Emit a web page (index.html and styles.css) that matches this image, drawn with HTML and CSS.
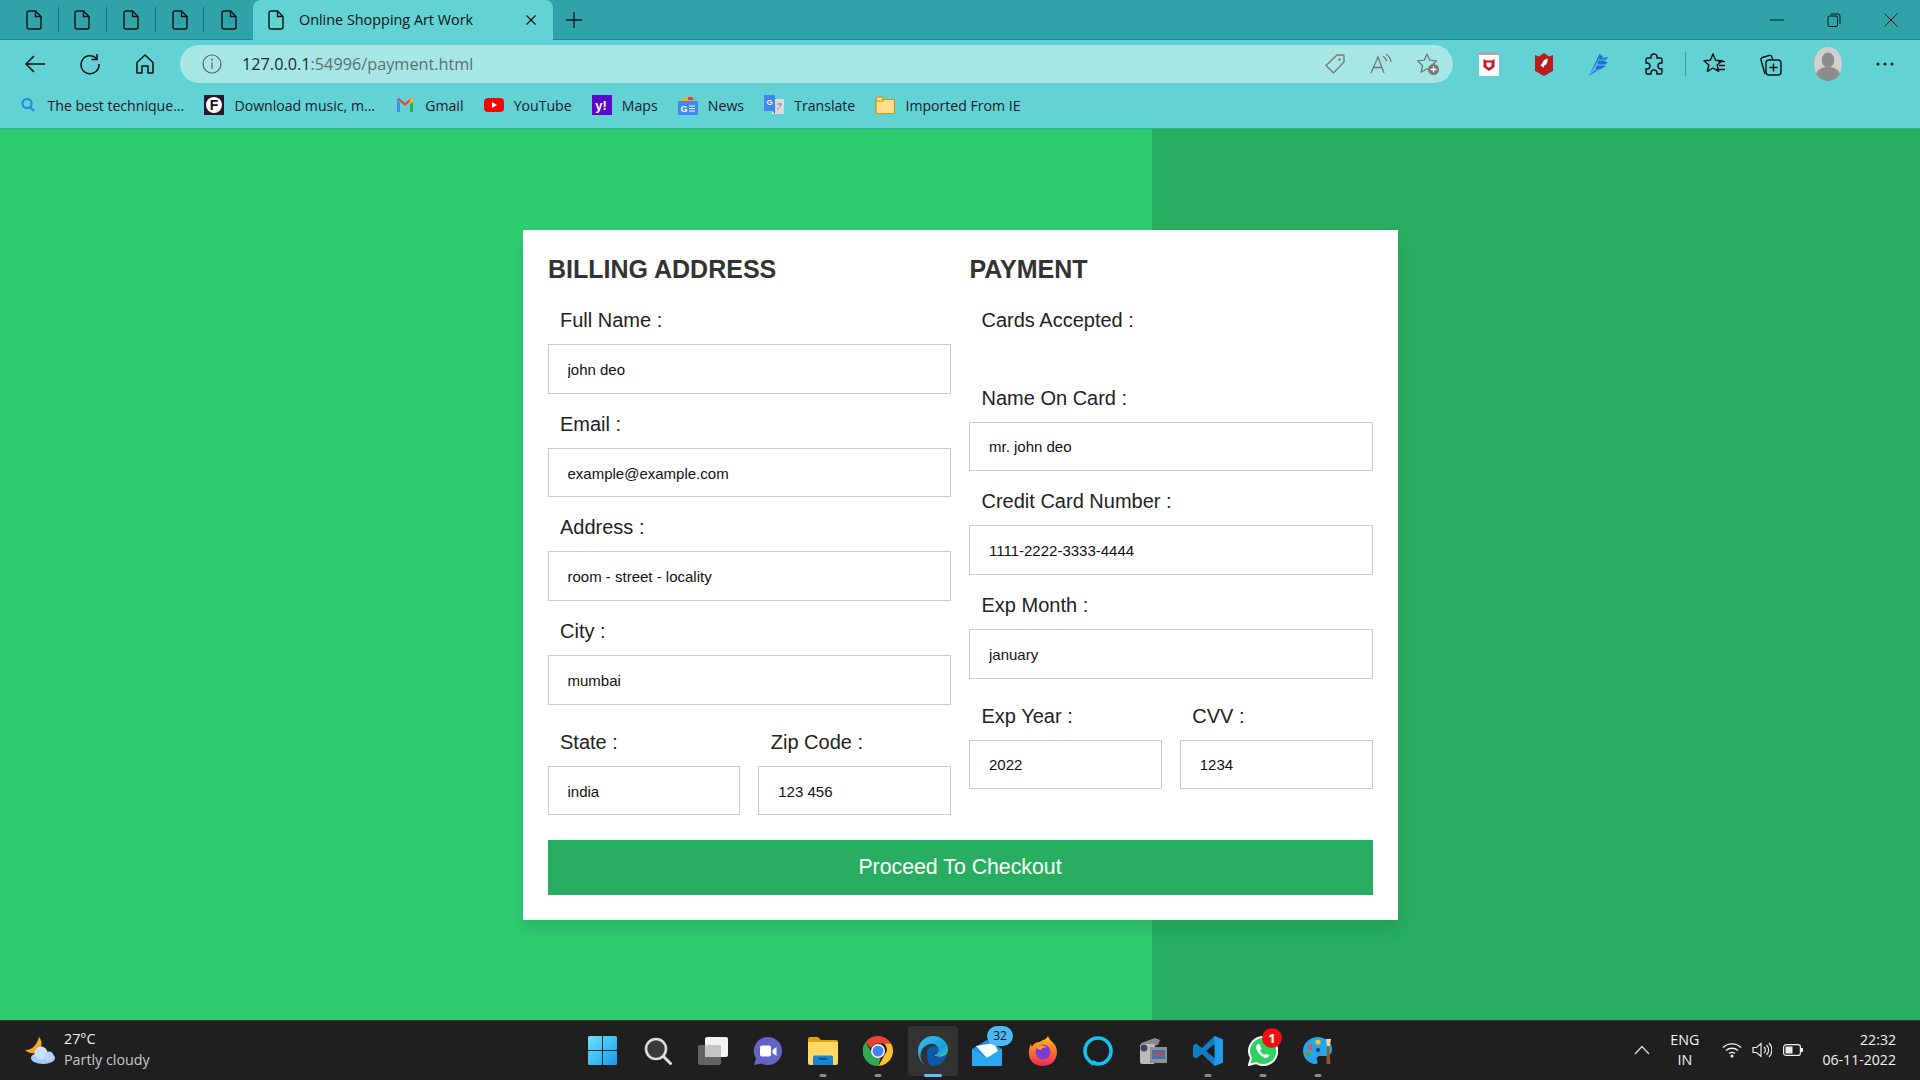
FILE: index.html
```html
<!DOCTYPE html>
<html lang="en">
<head>
<meta charset="UTF-8">
<meta name="viewport" content="width=device-width, initial-scale=1.0">
<title>Online Shopping Art Work</title>
<link rel="stylesheet" href="styles.css">
</head>
<body>
<svg class="defs" width="0" height="0">
    <symbol id="doc" viewBox="0 0 16 20"><path d="M3 1h6.5L15 6.5V17a2 2 0 0 1-2 2H3a2 2 0 0 1-2-2V3a2 2 0 0 1 2-2z" fill="none" stroke="#111" stroke-width="1.4"/><path d="M9.5 1v5.5H15" fill="none" stroke="#111" stroke-width="1.4"/></symbol>
</svg>

<!-- browser top -->
<div class="tabstrip">
    <div class="pinned"><svg class="doc"><use href="#doc"/></svg></div>
    <div class="pinned"><svg class="doc"><use href="#doc"/></svg></div>
    <div class="pinned"><svg class="doc"><use href="#doc"/></svg></div>
    <div class="pinned"><svg class="doc"><use href="#doc"/></svg></div>
    <div class="pinned last"><svg class="doc"><use href="#doc"/></svg></div>
    <div class="tab">
        <svg class="doc"><use href="#doc"/></svg>
        <span class="tab-title">Online Shopping Art Work</span>
        <svg class="tab-close" viewBox="0 0 12 12"><path d="M1.5 1.5l9 9M10.5 1.5l-9 9" stroke="#111" stroke-width="1.2"/></svg>
    </div>
    <svg class="tab-plus" viewBox="0 0 18 18"><path d="M9 1v16M1 9h16" stroke="#111" stroke-width="1.3"/></svg>
    <div class="winctl">
        <svg viewBox="0 0 14 14"><path d="M0 7h14" stroke="#111" stroke-width="1"/></svg>
        <svg viewBox="0 0 14 14"><rect x="1" y="3" width="9.5" height="10.5" rx="1.5" fill="none" stroke="#111"/><path d="M3.5 1h7.5a2 2 0 0 1 2 2v8" fill="none" stroke="#111"/></svg>
        <svg viewBox="0 0 14 14"><path d="M.5.5l13 13M13.5.5l-13 13" stroke="#111" stroke-width="1"/></svg>
    </div>
</div>

<div class="toolbar">
    <div class="tbtn"><svg viewBox="0 0 22 20" width="22" height="20"><path d="M21 10H2M10 2l-8 8 8 8" fill="none" stroke="#111" stroke-width="1.5"/></svg></div>
    <div class="tbtn"><svg viewBox="0 0 22 22" width="22" height="22"><path d="M17.5 5.5A9 9 0 1 0 20 11" fill="none" stroke="#111" stroke-width="1.5"/><path d="M18 1v5.5h-5.5" fill="none" stroke="#111" stroke-width="1.5"/></svg></div>
    <div class="tbtn"><svg viewBox="0 0 20 22" width="20" height="22"><path d="M2 9.5L10 2l8 7.5V20h-5v-7H7v7H2z" fill="none" stroke="#111" stroke-width="1.5" stroke-linejoin="round"/></svg></div>
    <div class="addr">
        <svg class="addr-info" viewBox="0 0 20 20"><circle cx="10" cy="10" r="9" fill="none" stroke="#666" stroke-width="1.2"/><path d="M10 8.5V15" stroke="#666" stroke-width="1.3"/><circle cx="10" cy="5.8" r="1" fill="#666"/></svg>
        <span class="url">127.0.0.1<span class="url-rest">:54996/payment.html</span></span>
        <div class="addr-icons">
            <svg viewBox="0 0 22 22" width="22" height="22"><path d="M13 2h6a1 1 0 0 1 1 1v6L9.5 20 2 12.5z" fill="none" stroke="#777" stroke-width="1.3" stroke-linejoin="round"/><circle cx="15.5" cy="6.5" r="1.2" fill="#777"/></svg>
            <svg viewBox="0 0 24 22" width="24" height="22"><path d="M2 20L9 4l6 16M4.5 14.5h9" fill="none" stroke="#777" stroke-width="1.3"/><path d="M14 3a8 8 0 0 1 3.5 5M17 1a11 11 0 0 1 5 8" fill="none" stroke="#777" stroke-width="1.3"/></svg>
            <svg viewBox="0 0 24 24" width="24" height="24"><path d="M11 2l2.8 6.2 6.7.7-5 4.6 1.4 6.6-5.900-3.400-5.900 3.400 1.400-6.600-5-4.600 6.700-.7z" fill="none" stroke="#777" stroke-width="1.3" stroke-linejoin="round"/><circle cx="17.5" cy="17.5" r="5.5" fill="#777"/><path d="M17.5 14.5v6M14.5 17.5h6" stroke="#fff" stroke-width="1.3"/></svg>
        </div>
    </div>
    <div class="tbtn first-ext"><svg viewBox="0 0 20 24" width="20" height="24"><rect y="0" width="20" height="24" fill="#fff"/><rect width="20" height="3" fill="#aaa"/><path d="M4.5 7l2.5 1.5h6L15.5 7v8L10 19l-5.5-4z" fill="#c8171e"/><path d="M7.5 10.5h5v3.5L10 15.8 7.5 14z" fill="#fff"/></svg></div>
    <div class="tbtn"><svg viewBox="0 0 18 24" width="18" height="24"><path d="M0 3l4 1.5L9 1l5 3.5L18 3v16l-9 5-9-5z" fill="#b81c1c"/><path d="M12.5 6.5c-3 .5-5 3-5.500 5.500L5 13.500l2 .5 1 2 1.500-2.500c2.500-1 3.500-4 3-7z" fill="#fff"/></svg></div>
    <div class="tbtn"><svg viewBox="0 0 22 26" width="22" height="26"><path d="M1 25L12 2l1 3 2-1-1 3 6-1-3 5h3l-4 4h2l-5 3-6 3z" fill="#1e6fd0"/><path d="M1 25L12 6 7 19z" fill="#6cb6f5"/><path d="M11 9h9M9 14h8M7 19h6" stroke="#5fd0d4" stroke-width="1.2"/></svg></div>
    <div class="tbtn"><svg viewBox="0 0 22 24" width="22" height="24"><path d="M8 5a3 3 0 0 1 6 0v1h3.5a1.5 1.5 0 0 1 1.5 1.5V11h-1a3 3 0 0 0 0 6h1v3.5a1.5 1.5 0 0 1-1.5 1.5H14v-1a3 3 0 0 0-6 0v1H4.500A1.500 1.500 0 0 1 3 20.500V17h1a3 3 0 0 0 0-6H3V7.500A1.500 1.500 0 0 1 4.500 6H8z" fill="none" stroke="#111" stroke-width="1.4"/></svg></div>
    <div class="tsep"></div>
    <div class="tbtn"><svg viewBox="0 0 24 24" width="24" height="24"><path d="M10 2l2.600 6.200 6.400.6-4.800 4.200 1.400 6.500L10 16l-5.600 3.500L5.800 13 1 8.800l6.400-.6z" fill="none" stroke="#111" stroke-width="1.4" stroke-linejoin="round"/><path d="M15 9.500h7M16 13.500h6M13 17.500h9" stroke="#111" stroke-width="1.3"/></svg></div>
    <div class="tbtn"><svg viewBox="0 0 24 26" width="24" height="26"><path d="M7 23L3 9a2 2 0 0 1 1.500-2.500L11 4.500a2.500 2.500 0 0 1 3 1.800l.5 1.700" fill="none" stroke="#111" stroke-width="1.4"/><rect x="8" y="9" width="15" height="15" rx="3" fill="none" stroke="#111" stroke-width="1.4"/><path d="M15.500 12.500v8M11.500 16.500h8" stroke="#111" stroke-width="1.4"/></svg></div>
    <div class="tbtn avatar-slot">
        <svg viewBox="0 0 28 34" width="28" height="34"><ellipse cx="14" cy="17" rx="14" ry="17" fill="#d2d0cc"/><ellipse cx="14" cy="13" rx="6.3" ry="7.5" fill="#8d8d8d"/><path d="M2 27c2-5 6-7 12-7s10 2 12 7c-3 4.500-7.500 7-12 7s-9-2.500-12-7z" fill="#8d8d8d"/></svg>
    </div>
    <div class="tbtn"><svg viewBox="0 0 18 4" width="18" height="4"><circle cx="2" cy="2" r="1.5" fill="#111"/><circle cx="9" cy="2" r="1.5" fill="#111"/><circle cx="16" cy="2" r="1.5" fill="#111"/></svg></div>
</div>

<div class="bookmarks">
    <a class="bm"><svg viewBox="0 0 20 20"><circle cx="9" cy="8.5" r="4.5" fill="none" stroke="#2a86d8" stroke-width="2.2"/><path d="M12 12l4 4" stroke="#2a86d8" stroke-width="2.4"/></svg>The best technique...</a>
    <a class="bm"><svg viewBox="0 0 20 20"><rect width="20" height="20" fill="#2a1430"/><circle cx="10" cy="10" r="8" fill="#fff"/><text x="10" y="15" font-size="14" font-weight="700" text-anchor="middle" font-family="Liberation Sans" fill="#111">F</text></svg>Download music, m...</a>
    <a class="bm"><svg viewBox="0 0 20 20"><path d="M2 4v13h3V8z" fill="#4285f4"/><path d="M15 8v9h3V4z" fill="#34a853"/><path d="M2 4l8 7 8-7-2-1-6 5-6-5z" fill="#ea4335"/><path d="M15 4l3-1v4l-3 2z" fill="#fbbc04"/></svg>Gmail</a>
    <a class="bm"><svg viewBox="0 0 20 20"><rect y="3" width="20" height="14" rx="4" fill="#f00"/><path d="M8 7l5 3-5 3z" fill="#fff"/></svg>YouTube</a>
    <a class="bm"><svg viewBox="0 0 20 20"><rect width="20" height="20" fill="#5b06c9"/><text x="9" y="15" font-size="13" font-weight="700" text-anchor="middle" font-family="Liberation Sans" fill="#fff">y!</text></svg>Maps</a>
    <a class="bm"><svg viewBox="0 0 20 20"><path d="M3 5l2-2h5l1 1h4l2 3H3z" fill="#f4b400"/><path d="M10 2h4l2 3h-6z" fill="#db4437"/><rect y="6" width="20" height="14" fill="#4285f4"/><text x="6" y="17" font-size="9" font-weight="700" text-anchor="middle" font-family="Liberation Sans" fill="#fff">G</text><path d="M11 11h6M11 13.500h6M11 16h6" stroke="#fff" stroke-width="1.2"/></svg>News</a>
    <a class="bm"><svg viewBox="0 0 20 20"><rect x="8" y="4" width="12" height="15" fill="#d9d9d9"/><rect width="11" height="16" fill="#4285f4"/><path d="M9 16l2 3v-3z" fill="#3367d6"/><text x="5.5" y="10" font-size="8" font-weight="700" text-anchor="middle" font-family="Liberation Sans" fill="#fff">G</text><path d="M13 9h5M15.500 8v1M17 9c-.5 3-2 4-4 5" fill="none" stroke="#888"/></svg>Translate</a>
    <a class="bm"><svg viewBox="0 0 20 20"><path d="M1 3.500A1.500 1.500 0 0 1 2.500 2h4A1.500 1.500 0 0 1 8 3.500V4.500h10a1.500 1.500 0 0 1 1.500 1.500v11a1.500 1.500 0 0 1-1.500 1.500H2.500A1.500 1.500 0 0 1 1 17z" fill="#ffe08a" stroke="#c8960f" stroke-width="1.2"/><path d="M1 6h7V4" fill="none" stroke="#c8960f" stroke-width="1.2"/></svg>Imported From IE</a>
</div>

<!-- payment page -->
<main class="page">
    <form class="checkout" onsubmit="event.preventDefault()">
        <div class="cols">
            <div class="col">
                <h3 class="title">Billing Address</h3>
                <div class="field"><label>Full Name :</label><input type="text" value="john deo"></div>
                <div class="field"><label>Email :</label><input type="text" value="example@example.com"></div>
                <div class="field"><label>Address :</label><input type="text" value="room - street - locality"></div>
                <div class="field"><label>City :</label><input type="text" value="mumbai"></div>
                <div class="pair">
                    <div class="field"><label>State :</label><input type="text" value="india"></div>
                    <div class="field"><label>Zip Code :</label><input type="text" value="123 456"></div>
                </div>
            </div>
            <div class="col">
                <h3 class="title">Payment</h3>
                <div class="field"><label>Cards Accepted :</label><div class="cards"></div></div>
                <div class="field"><label>Name On Card :</label><input type="text" value="mr. john deo"></div>
                <div class="field"><label>Credit Card Number :</label><input type="text" value="1111-2222-3333-4444"></div>
                <div class="field"><label>Exp Month :</label><input type="text" value="january"></div>
                <div class="pair">
                    <div class="field"><label>Exp Year :</label><input type="text" value="2022"></div>
                    <div class="field"><label>CVV :</label><input type="text" value="1234"></div>
                </div>
            </div>
        </div>
        <button class="submit">Proceed To Checkout</button>
    </form>
</main>

<!-- windows taskbar -->
<footer class="taskbar">
    <div class="weather">
        <svg viewBox="0 0 32 30" width="32" height="30">
            <path d="M15 1a10 10 0 0 1-2 15 10 10 0 0 1-12-2c6 1 12-5 14-13z" fill="#f5a623"/>
            <ellipse cx="19" cy="22" rx="12" ry="6" fill="#a9cdf2"/><circle cx="17" cy="17" r="6.5" fill="#c9e0f8"/><circle cx="25" cy="20" r="4.5" fill="#b6d5f5"/>
        </svg>
        <div class="weather-text"><span>27°C</span><span class="dim">Partly cloudy</span></div>
    </div>

    <div class="apps">
        <div class="app"><svg viewBox="0 0 29 29" width="29" height="29"><defs><linearGradient id="win" x1="0" y1="0" x2="1" y2="1"><stop offset="0" stop-color="#6fe4fa"/><stop offset="1" stop-color="#0f9bf5"/></linearGradient></defs><path d="M0 1.5A1.5 1.5 0 0 1 1.5 0H14v14H0zM15 0h12.5A1.5 1.5 0 0 1 29 1.5V14H15zM0 15h14v14H1.5A1.5 1.5 0 0 1 0 27.5zM15 15h14v12.5a1.5 1.5 0 0 1-1.5 1.5H15z" fill="url(#win)"/></svg></div>
        <div class="app"><svg viewBox="0 0 28 28" width="28" height="28"><circle cx="12" cy="12" r="10" fill="#3a3a3a" stroke="#ddd" stroke-width="2.6"/><path d="M19.5 19.5l7 7" stroke="#ddd" stroke-width="3" stroke-linecap="round"/></svg></div>
        <div class="app"><svg viewBox="0 0 30 28" width="30" height="28"><rect x="7" y="0" width="23" height="20" rx="2" fill="#f2f2f2"/><rect x="0" y="8" width="23" height="20" rx="2" fill="#6a6a6a" fill-opacity=".9"/><rect x="7" y="8" width="16" height="12" fill="#c4c4c4"/></svg></div>
        <div class="app"><svg viewBox="0 0 30 30" width="30" height="30"><path d="M15 1a14 14 0 1 1-6.500 26.400L1 29l2-6.500A14 14 0 0 1 15 1z" fill="#6264c8"/><rect x="7" y="9.5" width="11" height="11" rx="2" fill="#fff"/><path d="M19.5 14l4-3v9l-4-3z" fill="#fff"/></svg></div>
        <div class="app has-pill"><svg viewBox="0 0 30 28" width="30" height="28"><path d="M0 2a2 2 0 0 1 2-2h8l3 3h15a2 2 0 0 1 2 2v3H0z" fill="#e0a411"/><path d="M0 5h30v21a2 2 0 0 1-2 2H2a2 2 0 0 1-2-2z" fill="#fcd964"/><path d="M5 20a1.5 1.5 0 0 1 1.5-1.5h17A1.5 1.5 0 0 1 25 20v8H5z" fill="#0f86d6"/><rect x="11" y="21" width="8" height="1.5" fill="#083c66"/></svg></div>
        <div class="app has-pill"><svg viewBox="0 0 30 30" width="30" height="30"><path d="M15 0a15 15 0 0 1 13 7.5H15a7.5 7.5 0 0 0-7 5L2.700 6A15 15 0 0 1 15 0z" fill="#ea4335"/><path d="M28 7.5A15 15 0 0 1 15.500 30l6-11a7.500 7.500 0 0 0-.5-11.500z" fill="#fbc02d"/><path d="M15.500 30A15 15 0 0 1 2.700 6l6 10.500a7.500 7.500 0 0 0 9 5z" fill="#34a853"/><circle cx="15" cy="15" r="7" fill="#fff"/><circle cx="15" cy="15" r="5.5" fill="#4285f4"/></svg></div>
        <div class="app active"><svg viewBox="0 0 30 30" width="30" height="30"><defs><linearGradient id="edg" x1="0" y1="0" x2="1" y2="1"><stop offset="0" stop-color="#37c3e6"/><stop offset=".6" stop-color="#1a9de0"/><stop offset="1" stop-color="#5ce08a"/></linearGradient></defs><path d="M15 0c8.500 0 15 6 15 13.500 0 4.500-3.500 7.500-8 7.500-3 0-5.500-1-6.500-2.500 3 0 5-2 5-4.500 0-4-4-7-8.500-6C7 9 3 13 2.500 18.500 2 24 5 28 9 30 3.500 28 0 22 0 15 0 7 6.500 0 15 0z" fill="url(#edg)"/><path d="M9 17c0-4 3-7 7-7 3 0 5 2 4.500 4.500-.5 2-3 3-5 3-2.500 0 .5 3.500 6 3.500 3 0 6-1.500 8-3.500-1.500 6-7 12.500-14 12.500C10 30 9 23 9 17z" fill="#0c5aa6"/></svg></div>
        <div class="app"><svg viewBox="0 0 32 30" width="32" height="30"><path d="M0 13l15-9 15 9v17H0z" fill="#1995e4"/><path d="M4 10l18-3 4 8-11 7z" fill="#fff"/><path d="M0 13l15 9 15-9v17H0z" fill="#2ca8ee"/></svg><span class="badge blue">32</span></div>
        <div class="app"><svg viewBox="0 0 30 30" width="30" height="30"><defs><linearGradient id="fox" x1="0" y1="0" x2="0" y2="1"><stop offset="0" stop-color="#ffc21c"/><stop offset=".55" stop-color="#ff6a2b"/><stop offset="1" stop-color="#e92a5a"/></linearGradient></defs><path d="M20 0c1 4 6 6 8 11 3 8-1 19-13 19C6 30 0 24 1 15c0-3 1-5 2-7l1 3c1-3 4-5 8-5 2-2 6-2 8-6z" fill="url(#fox)"/><circle cx="15" cy="16" r="7.5" fill="#7a3bd6"/><path d="M8 11c4-3 9-2 11 1-3-1-5 0-6 2-2 0-4-1-5-3z" fill="#ff9a2b"/></svg></div>
        <div class="app"><svg viewBox="0 0 30 30" width="30" height="30"><circle cx="15" cy="15" r="13" fill="none" stroke="#12c2f0" stroke-width="3.6"/><path d="M8 30l2-6 5 2.500z" fill="#12c2f0"/></svg></div>
        <div class="app"><svg viewBox="0 0 30 28" width="30" height="28"><path d="M3 6l14-5 5 2-2 5-15 3z" fill="#8c8c8c"/><rect x="2" y="7" width="15" height="20" rx="2" fill="#bbb"/><circle cx="6" cy="11" r="3.5" fill="#39455a"/><rect x="12" y="10" width="17" height="16" fill="#8f8f8f"/><rect x="14" y="13" width="13" height="9" fill="#3d72ae"/><rect x="16" y="16" width="9" height="3" fill="#c8454a"/></svg></div>
        <div class="app has-pill"><svg viewBox="0 0 30 30" width="30" height="30"><path d="M21.500 0L9 12 3 7.500 0 9.500v11L3 22.500l6-4.500 12.500 12 8.500-3.500V3.500z" fill="#0f7fc7"/><path d="M21.500 0L30 3.500v23L21.500 30z" fill="#1f9ce8"/><path d="M21.500 8L13 15l8.500 7z" fill="#1d1d1d"/></svg></div>
        <div class="app has-pill"><svg viewBox="0 0 30 30" width="30" height="30"><path d="M15 1a14 14 0 1 1-7 26L1 29l2-7A14 14 0 0 1 15 1z" fill="#2bd161" stroke="#fff" stroke-width="2"/><path d="M10 8c-2 1-2.500 3.500-1 6.500 1.500 3 4 5.500 7 7 2.500 1 4.500 0 5.500-2l-3.500-2-1.500 1.500c-2-1-3.500-2.500-4.500-4.500l1.500-1.500L11.500 8z" fill="#fff"/></svg><span class="badge red">1</span></div>
        <div class="app has-pill"><svg viewBox="0 0 30 30" width="30" height="30"><path d="M15 1C7 1 0 7 0 15c0 8 7 13 12 13 3 0 3-2 2-4-1-3 1-4 4-4h5c3 0 6-2 6-7C29 6 22 1 15 1z" fill="#2aa4e8"/><circle cx="15" cy="6" r="2.6" fill="#f4c21c"/><circle cx="7" cy="11" r="2.6" fill="#e2533a"/><circle cx="5" cy="18" r="2.6" fill="#4fa648"/><circle cx="15" cy="14" r="2" fill="#1c3a5e"/><path d="M24 10l2 0 1.500 18h-4z" fill="#8a5a2b"/><path d="M23 3h5l-1 7h-3z" fill="#e8d9b0"/></svg></div>
    </div>

    <div class="tray">
        <svg class="tray-up" viewBox="0 0 16 10" width="16" height="10"><path d="M1 9l7-7.500L15 9" fill="none" stroke="#ddd" stroke-width="1.3"/></svg>
        <div class="lang"><span>ENG</span><span>IN</span></div>
        <svg class="tray-wifi" viewBox="0 0 20 16" width="20" height="16"><path d="M1 5.500a13 13 0 0 1 18 0M4 8.500a9 9 0 0 1 12 0M7 11.500a5 5 0 0 1 6 0" fill="none" stroke="#eee" stroke-width="1.4"/><circle cx="10" cy="14" r="1.5" fill="#eee"/></svg>
        <svg class="tray-vol" viewBox="0 0 20 16" width="20" height="16"><path d="M1 5.500h3.500L9 1.500v13l-4.500-4H1z" fill="none" stroke="#eee" stroke-width="1.2"/><path d="M12 5a4 4 0 0 1 0 6M14.500 3a7 7 0 0 1 0 10M17 1a10 10 0 0 1 0 14" fill="none" stroke="#eee" stroke-width="1.2"/></svg>
        <svg class="tray-bat" viewBox="0 0 20 12" width="20" height="12"><rect x=".6" y=".6" width="16.8" height="10.8" rx="2.5" fill="none" stroke="#eee" stroke-width="1.2"/><rect x="2.5" y="2.5" width="7" height="7" fill="#eee"/><rect x="18" y="4" width="2" height="4" fill="#eee"/></svg>
        <div class="clock"><span>22:32</span><span>06-11-2022</span></div>
    </div>
</footer>
</body>
</html>
```

FILE: styles.css
```css
*{
    box-sizing: border-box;
}
html,body{
    margin: 0;
    height: 100%;
}
body{
    width: 1920px;
    height: 1080px;
    overflow: hidden;
    display: flex;
    flex-direction: column;
    font-family: "Open Sans", "Noto Sans", sans-serif;
}
.defs{
    position: absolute;
}

/* tab strip */
.tabstrip{
    height: 40px;
    flex: none;
    background: #2fa3a8;
    border-bottom: 1px solid #26868b;
    display: flex;
    align-items: center;
    padding-left: 10px;
}
.pinned{
    width: 48.6px;
    height: 25px;
    display: flex;
    align-items: center;
    justify-content: center;
    border-right: 1px solid #1d6e72;
}
.pinned.last{
    border-right: none;
}
.doc{
    width: 16px;
    height: 20px;
    flex: none;
}
.tab{
    width: 300px;
    height: 40px;
    align-self: flex-start;
    background: #62d2d4;
    border-radius: 8px 8px 0 0;
    display: flex;
    align-items: center;
    padding: 0 16px 1px 15px;
    font-size: 14.4px;
    color: #111;
}
.tab-title{
    margin-left: 15px;
    flex: 1;
}
.tab-close{
    width: 12px;
    height: 12px;
}
.tab-plus{
    width: 18px;
    height: 18px;
    margin-left: 12px;
}
.winctl{
    margin-left: auto;
    display: flex;
    align-items: center;
    gap: 43px;
    padding-right: 22px;
}
.winctl svg{
    width: 14px;
    height: 14px;
}

/* toolbar */
.toolbar{
    height: 48px;
    flex: none;
    background: #62d2d4;
    display: flex;
    align-items: center;
    padding: 0 0 0 7.5px;
}
.tbtn{
    width: 55px;
    height: 38px;
    flex: none;
    display: flex;
    align-items: center;
    justify-content: center;
}
.first-ext{
    margin-left: 8.5px;
}
.avatar-slot{
    width: 60px;
}
.tsep{
    width: 1px;
    height: 24px;
    background: #3e9a9d;
    margin: 0 2px 0 3px;
}
.addr{
    width: 1273px;
    height: 38px;
    margin-left: 7.5px;
    flex: none;
    background: #a6e7e5;
    border-radius: 19px;
    display: flex;
    align-items: center;
    padding-left: 22px;
    color: #1b2b2b;
}
.addr-info{
    width: 20px;
    height: 20px;
}
.url{
    margin-left: 20px;
    font-size: 16.25px;
}
.url-rest{
    color: #5f6f6f;
}
.addr-icons{
    margin-left: auto;
    display: flex;
    align-items: center;
    gap: 23px;
    padding-right: 13px;
}

/* bookmarks */
.bookmarks{
    height: 41px;
    flex: none;
    background: #62d2d4;
    border-bottom: 1px solid #3cae9f;
    display: flex;
    align-items: center;
    padding: 0 0 6px 17.5px;
    font-size: 14.1px;
    color: #1a1a2a;
}
.bm{
    display: flex;
    align-items: center;
    margin-right: 20.2px;
    white-space: nowrap;
}
.bm svg{
    width: 20px;
    height: 20px;
    margin-right: 10px;
    flex: none;
}

/* page */
.page{
    flex: 1;
    display: flex;
    align-items: center;
    justify-content: center;
    padding-top: 1px;
    background: linear-gradient(90deg, #2ecc71 1152px, #27ae60 1152px);
    font-family: "Liberation Sans", Arial, sans-serif;
}
.checkout{
    width: 875px;
    padding: 25px;
    background: #fff;
    box-shadow: 0 10px 15px rgba(0,0,0,.1);
}
.cols{
    display: flex;
    gap: 18px;
}
.col{
    flex: 1 1 0;
    min-width: 0;
}
.title{
    margin: 0;
    padding-left: .5px;
    height: 35px;
    font-size: 25px;
    line-height: 29px;
    font-weight: bold;
    color: #333;
    text-transform: uppercase;
}
.field{
    margin-top: 15px;
}
.field label{
    display: block;
    padding: 4px 12.5px 12px;
    font-size: 20px;
    line-height: 23px;
    color: #222;
}
.field input{
    display: block;
    width: 100%;
    height: 49.7px;
    padding: 1px 19px 0;
    border: 1px solid #ccc;
    border-radius: 0;
    outline: none;
    font-family: inherit;
    font-size: 15px;
    color: #111;
    background: #fff;
}
.cards{
    height: 23.5px;
}
.pair{
    display: flex;
    gap: 18px;
    margin-top: 22px;
}
.pair .field{
    flex: 1 1 0;
    min-width: 0;
    margin-top: 0;
}
.submit{
    display: block;
    width: 100%;
    height: 55px;
    margin-top: 24.5px;
    padding: 0;
    border: none;
    background: #27ae60;
    color: #fff;
    font-family: inherit;
    font-size: 21.3px;
}

/* taskbar */
.taskbar{
    height: 60px;
    flex: none;
    background: #1f1f1f;
    border-top: 1px solid #3a3a3a;
    display: grid;
    grid-template-columns: 1fr auto 1fr;
    align-items: center;
    color: #f2f2f2;
    font-size: 14.3px;
}
.weather{
    display: flex;
    align-items: center;
    padding-left: 24px;
    gap: 8px;
}
.weather-text{
    display: flex;
    flex-direction: column;
    line-height: 21px;
    margin-top: -4px;
}
.dim{
    color: #c8c8c8;
}
.apps{
    display: flex;
}
.app{
    width: 55px;
    height: 50px;
    position: relative;
    display: flex;
    align-items: center;
    justify-content: center;
}
.app.active{
    background: #333;
    border-radius: 4px;
    width: 50px;
    margin: 0 2.5px;
}
.app.active::after,
.app.has-pill::after{
    content: "";
    position: absolute;
    left: 50%;
    bottom: -1px;
    transform: translateX(-50%);
    width: 7px;
    height: 3px;
    border-radius: 2px;
    background: #8a8a8a;
}
.app.active::after{
    width: 18px;
    background: #5cc4f5;
}
.badge{
    position: absolute;
    top: 0;
    display: flex;
    align-items: center;
    justify-content: center;
    font-family: "Open Sans", sans-serif;
    border-radius: 10px;
    height: 20px;
}
.badge.blue{
    left: 27px;
    width: 26px;
    background: #4cb8f5;
    color: #111;
    font-size: 12px;
}
.badge.red{
    left: 27px;
    top: 2px;
    width: 20px;
    background: #f01010;
    color: #fff;
    font-size: 13px;
    font-weight: bold;
}
.tray{
    display: flex;
    align-items: center;
    justify-content: flex-end;
    padding-right: 24px;
    margin-top: -1px;
}
.tray-up{
    margin-right: 20px;
}
.lang,
.clock{
    display: flex;
    flex-direction: column;
    line-height: 20px;
}
.lang{
    align-items: center;
    margin-right: 23px;
}
.tray-vol{
    margin-left: 10px;
}
.tray-bat{
    margin-left: 11px;
}
.clock{
    align-items: flex-end;
    margin-left: 19px;
    font-size: 14.1px;
}
```
